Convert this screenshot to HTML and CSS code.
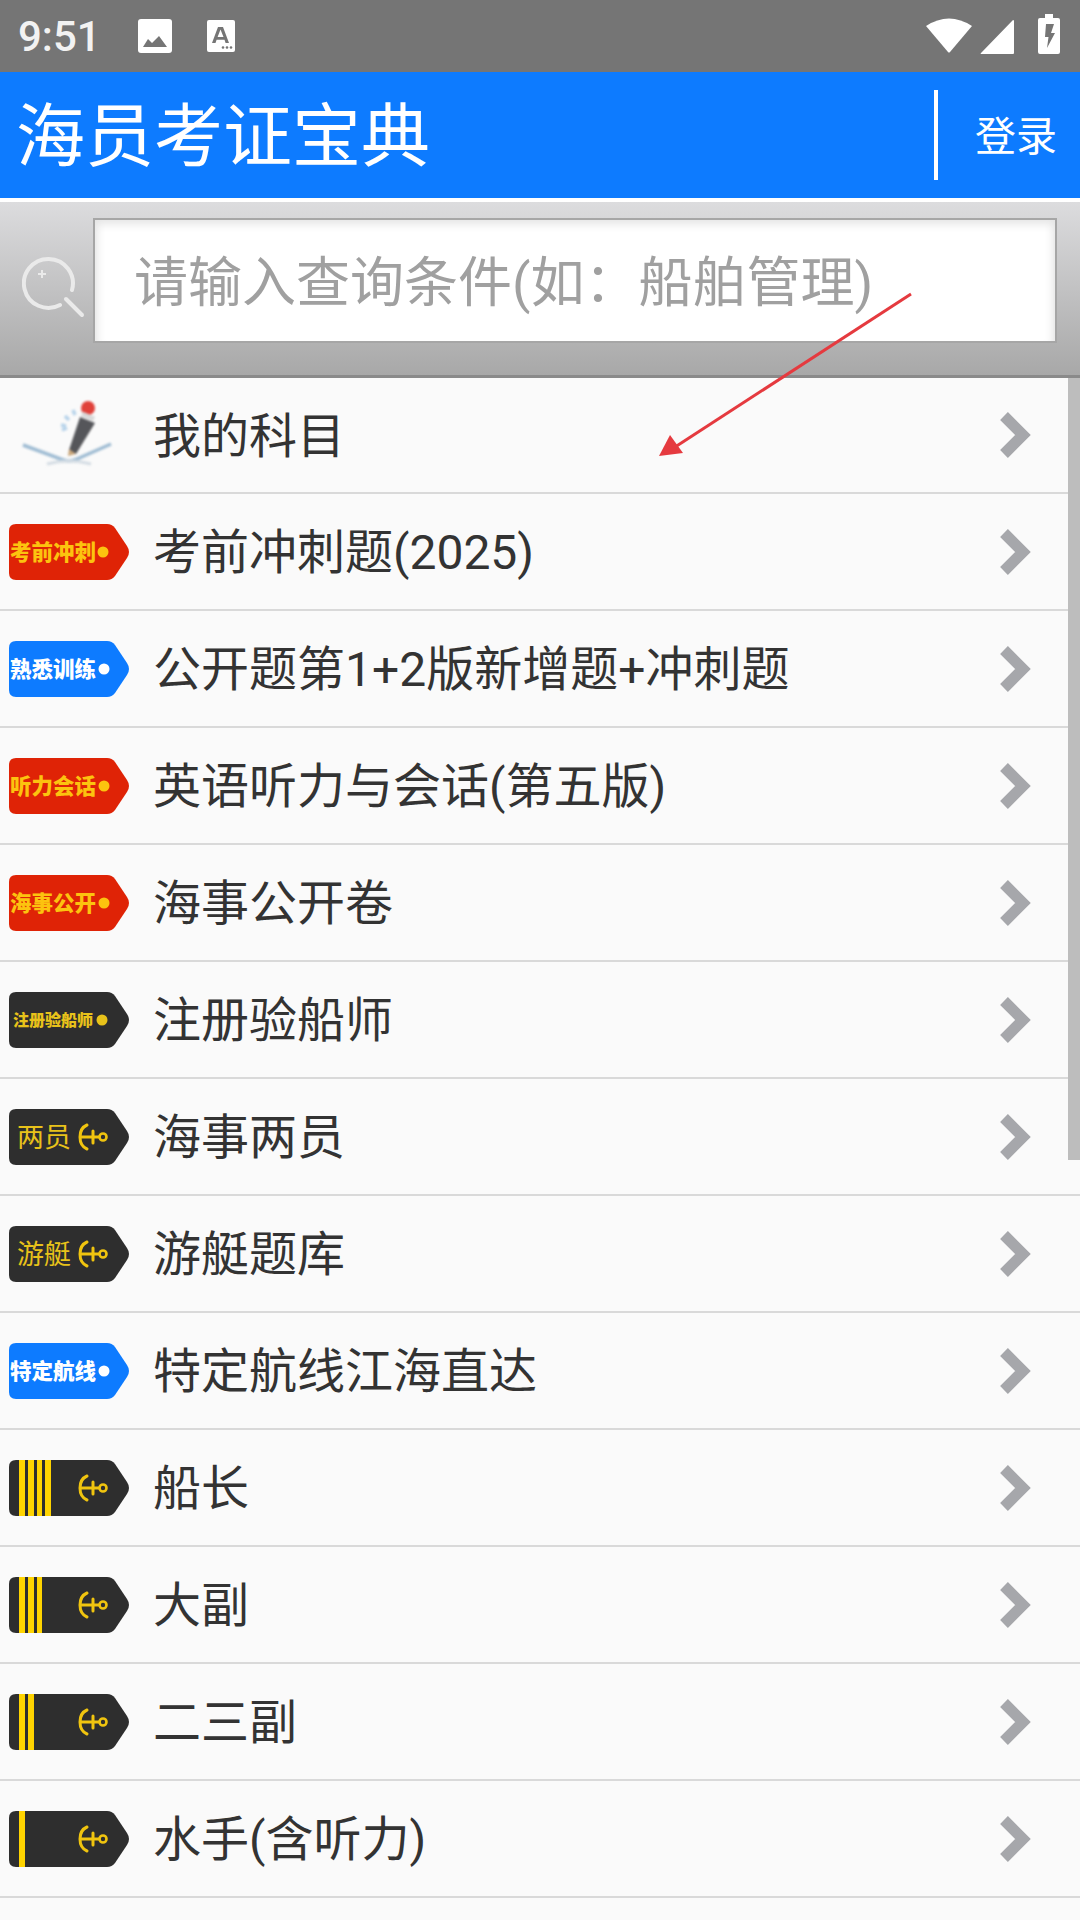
FILE: index.html
```html
<!DOCTYPE html>
<html lang="zh-CN">
<head>
<meta charset="utf-8">
<title>海员考证宝典</title>
<link rel="stylesheet" href="styles.css">
</head>
<body>
<svg class="defs" width="0" height="0" aria-hidden="true">
  <defs>
    <path id="tag" d="M7 0H98Q103 0 106 4L118 22Q122 28 118 34L106 52Q103 56 98 56H7Q0 56 0 49V7Q0 0 7 0Z"/>
    <g id="anchor" fill="none" stroke-linecap="round">
      <path d="M3 -12Q-4 -9 -4 0Q-4 9 3 12" stroke-width="3"/>
      <path d="M-3 0H15M9 -6V6" stroke-width="3"/>
      <circle cx="19" cy="0" r="3.500" stroke-width="2.600"/>
    </g>
    <symbol id="chevron" viewBox="0 0 32 48"><path d="M5 5L24 24L5 43"/></symbol>
  </defs>
</svg>
<div class="phone">
  <header class="status">
    <div class="status-left">
      <span class="time">9:51</span>
      <svg class="ic-img" viewBox="0 0 34 34"><path fill="#fff" d="M3 0H31Q34 0 34 3V31Q34 34 31 34H3Q0 34 0 31V3Q0 0 3 0Z"/><path fill="#757575" d="M5 28L10 20L14 24L21 17L29 28Z"/></svg>
      <svg class="ic-a" viewBox="0 0 28 32"><path fill="#fff" d="M2 0H26Q28 0 28 2V30Q28 32 26 32H2Q0 32 0 30V2Q0 0 2 0Z"/><path fill="#757575" d="M11 7H16L22 23H18.600L17.500 19.800H9.600L8.500 23H5ZM10.600 17H16.500L13.500 9.500Z"/><circle cx="16" cy="27.500" r="1.300" fill="#757575"/><circle cx="20" cy="27.500" r="1.300" fill="#757575"/><circle cx="24" cy="27.500" r="1.300" fill="#757575"/></svg>
    </div>
    <div class="status-right">
      <svg class="ic-wifi" viewBox="0 0 46 36"><path fill="#fff" d="M0 9Q23 -6 46 9L24 35Q23 36 22 35Z"/></svg>
      <svg class="ic-signal" viewBox="0 0 34 34"><path fill="#fff" d="M33 0Q34 0 34 1V33Q34 34 33 34H1Q0 34 1 33Z"/></svg>
      <svg class="ic-batt" viewBox="0 0 22 40"><path fill="#fff" d="M7 0H15V4H20Q22 4 22 6V38Q22 40 20 40H2Q0 40 0 38V6Q0 4 2 4H7Z"/><path fill="#757575" d="M8 10H16L13 19H17L9 34L10.500 23H7Z"/></svg>
    </div>
  </header>

  <div class="appbar">
    <h1 class="title">海员考证宝典</h1>
    <span class="divider"></span>
    <span class="login">登录</span>
  </div>

  <div class="search">
    <svg class="ic-search" viewBox="0 0 64 66"><path d="M38 51A24.500 24.500 0 1 1 50 36" fill="none" stroke="#eaeaea" stroke-width="4" stroke-linecap="round"/><path d="M44 45L60 61" stroke="#eaeaea" stroke-width="4" stroke-linecap="round"/><path d="M20 16V24M16 20H24" stroke="#eaeaea" stroke-width="2"/></svg>
    <div class="input">请输入查询条件(如：船舶管理)</div>
  </div>

  <main class="list">
    <div class="row">
      <svg class="badge book" viewBox="0 0 120 70"><path d="M14 45L52 59Q60 63 68 59L102 44" fill="none" stroke="#9fbcd3" stroke-width="3.500"/><path d="M38 64Q60 58 82 64" fill="none" stroke="#d5dde4" stroke-width="3"/><path d="M60 50L71 17L86 23L67 54Z" fill="#55565a"/><path d="M59 56L60 49L67 54Z" fill="#c9a67a"/><circle cx="79" cy="8" r="7" fill="#e0413a"/><path d="M73 14L85 19" stroke="#d8d8d8" stroke-width="5"/><path d="M56 16L60 20M64 10L66 15M52 25L57 26M53 30L58 28" stroke="#b7d3ea" stroke-width="3.500"/></svg>
      <span class="label">我的科目</span>
      <svg class="chev"><use href="#chevron"/></svg>
    </div>
    <div class="row">
      <svg class="badge" viewBox="0 0 120 56"><use href="#tag" class="t-red"/><text x="1" y="36" class="bt b-gold">考前冲刺</text><circle cx="94" cy="28" r="5.500" class="b-gold"/></svg>
      <span class="label">考前冲刺题(2025)</span>
      <svg class="chev"><use href="#chevron"/></svg>
    </div>
    <div class="row">
      <svg class="badge" viewBox="0 0 120 56"><use href="#tag" class="t-blue"/><text x="1" y="36" class="bt b-white">熟悉训练</text><circle cx="95" cy="28" r="5.500" class="b-white"/></svg>
      <span class="label">公开题第1+2版新增题+冲刺题</span>
      <svg class="chev"><use href="#chevron"/></svg>
    </div>
    <div class="row">
      <svg class="badge" viewBox="0 0 120 56"><use href="#tag" class="t-red"/><text x="1" y="36" class="bt b-gold">听力会话</text><circle cx="95" cy="28" r="5.500" class="b-gold"/></svg>
      <span class="label">英语听力与会话(第五版)</span>
      <svg class="chev"><use href="#chevron"/></svg>
    </div>
    <div class="row">
      <svg class="badge" viewBox="0 0 120 56"><use href="#tag" class="t-red"/><text x="1" y="36" class="bt b-gold">海事公开</text><circle cx="95" cy="28" r="5.500" class="b-gold"/></svg>
      <span class="label">海事公开卷</span>
      <svg class="chev"><use href="#chevron"/></svg>
    </div>
    <div class="row">
      <svg class="badge" viewBox="0 0 120 56"><use href="#tag" class="t-dark"/><text x="4" y="34" class="bt-s b-dark">注册验船师</text><circle cx="93" cy="28" r="5.500" class="b-dark"/></svg>
      <span class="label">注册验船师</span>
      <svg class="chev"><use href="#chevron"/></svg>
    </div>
    <div class="row">
      <svg class="badge" viewBox="0 0 120 56"><use href="#tag" class="t-dark"/><text x="8" y="38" class="bt-l b-dark">两员</text><use href="#anchor" x="75" y="28" class="anchor"/></svg>
      <span class="label">海事两员</span>
      <svg class="chev"><use href="#chevron"/></svg>
    </div>
    <div class="row">
      <svg class="badge" viewBox="0 0 120 56"><use href="#tag" class="t-dark"/><text x="8" y="38" class="bt-l b-dark">游艇</text><use href="#anchor" x="75" y="28" class="anchor"/></svg>
      <span class="label">游艇题库</span>
      <svg class="chev"><use href="#chevron"/></svg>
    </div>
    <div class="row">
      <svg class="badge" viewBox="0 0 120 56"><use href="#tag" class="t-blue"/><text x="1" y="36" class="bt b-white">特定航线</text><circle cx="95" cy="28" r="5.500" class="b-white"/></svg>
      <span class="label">特定航线江海直达</span>
      <svg class="chev"><use href="#chevron"/></svg>
    </div>
    <div class="row">
      <svg class="badge" viewBox="0 0 120 56"><use href="#tag" class="t-dark"/><path class="stripe" d="M10 0h6v56h-6zM19 0h6v56h-6zM28 0h5v56h-5zM36 0h6v56h-6z"/><use href="#anchor" x="75" y="28" class="anchor"/></svg>
      <span class="label">船长</span>
      <svg class="chev"><use href="#chevron"/></svg>
    </div>
    <div class="row">
      <svg class="badge" viewBox="0 0 120 56"><use href="#tag" class="t-dark"/><path class="stripe" d="M10 0h6v56h-6zM19 0h6v56h-6zM28 0h5v56h-5z"/><use href="#anchor" x="75" y="28" class="anchor"/></svg>
      <span class="label">大副</span>
      <svg class="chev"><use href="#chevron"/></svg>
    </div>
    <div class="row">
      <svg class="badge" viewBox="0 0 120 56"><use href="#tag" class="t-dark"/><path class="stripe" d="M10 0h6v56h-6zM19 0h6v56h-6z"/><use href="#anchor" x="75" y="28" class="anchor"/></svg>
      <span class="label">二三副</span>
      <svg class="chev"><use href="#chevron"/></svg>
    </div>
    <div class="row">
      <svg class="badge" viewBox="0 0 120 56"><use href="#tag" class="t-dark"/><path class="stripe" d="M10 0h6v56h-6z"/><use href="#anchor" x="75" y="28" class="anchor"/></svg>
      <span class="label">水手(含听力)</span>
      <svg class="chev"><use href="#chevron"/></svg>
    </div>
    <div class="scrollbar"></div>
  </main>

  <svg class="arrow" viewBox="0 0 1080 1920"><path d="M911 294L672 449" stroke="#e53a3f" stroke-width="3" fill="none"/><path d="M659 456L670 435L683 453Z" fill="#e53a3f"/></svg>
</div>
</body>
</html>
```
FILE: styles.css
```css
* { box-sizing: border-box; }
html, body { margin: 0; padding: 0; }
body { width: 1080px; height: 1920px; overflow: hidden; background: #fafafa; font-family: Roboto, "Noto Sans CJK SC", sans-serif; }
.defs { position: absolute; }
.phone { position: relative; width: 1080px; height: 1920px; overflow: hidden; display: flex; flex-direction: column; }

.status { height: 72px; flex: none; background: #757575; display: flex; justify-content: space-between; align-items: center; padding: 0 20px 0 18px; }
.status-left, .status-right { display: flex; align-items: center; }
.time { font-size: 42px; font-weight: 500; color: #f2f2f2; width: 120px; }
.ic-img { width: 34px; height: 34px; margin-right: 35px; }
.ic-a { width: 28px; height: 32px; }
.ic-wifi { width: 46px; height: 36px; margin: 0 8px 2px 0; }
.ic-signal { width: 34px; height: 34px; margin: 2px 24px 0 0; }
.ic-batt { width: 22px; height: 40px; margin-bottom: 4px; }

.appbar { height: 126px; flex: none; background: #0d7bff; display: flex; align-items: center; color: #fff; padding-left: 16px; }
.title { margin: 5px 0 0; font-size: 69px; font-weight: 400; line-height: 1; flex: 1; white-space: nowrap; }
.divider { width: 4px; height: 90px; background: #fff; }
.login { font-size: 41px; width: 142px; padding-left: 37px; margin-bottom: 4px; font-weight: 400; }

.search { height: 180px; flex: none; border-top: 4px solid #fff; border-bottom: 3px solid #8a8a8a; background: linear-gradient(#dcdcde, #a8a8a8); display: flex; align-items: flex-start; padding: 16px 23px 0 22px; }
.ic-search { width: 64px; height: 66px; flex: none; margin: 36px 7px 0 0; }
.input { flex: 1; height: 125px; background: #fff; border: 2px solid #a6a6a6; box-shadow: inset 0 8px 10px -4px #e4e4e4, inset 10px 0 10px -8px #e4e4e4, inset -10px 0 10px -8px #e4e4e4; color: #a0a0a0; font-size: 54px; line-height: 113px; padding: 7px 0 0 39px; white-space: nowrap; font-weight: 400; }

.list { position: relative; flex: 1; background: #fafafa; }
.row { height: 117px; border-bottom: 2px solid #d9d9d9; display: flex; align-items: center; padding-right: 49px; }
.row:first-child { height: 116px; }
.badge { width: 120px; height: 56px; flex: none; margin-left: 9px; overflow: visible; }
.book { height: 70px; filter: blur(0.9px); }
.label { flex: 1; margin: 0 0 7px 24px; font-size: 48px; color: #333; white-space: nowrap; font-weight: 400; }
.chev { width: 32px; height: 48px; flex: none; filter: blur(0.6px); }
.chev use { fill: none; stroke: #a6a7ab; stroke-width: 11px; }
.scrollbar { position: absolute; top: 0; right: 0; width: 12px; height: 782px; background: #bdbdbd; }

.t-red { fill: #df2306; }
.t-blue { fill: #0d7bff; }
.t-dark { fill: #2e2e2e; }
.bt { font-size: 21.500px; font-weight: 900; }
.bt-s { font-size: 16px; font-weight: 900; }
.bt-l { font-size: 27px; font-weight: 400; }
.b-gold { fill: #fcc30f; }
.b-dark { fill: #e8c21a; }
.b-white { fill: #fff; }
.stripe { fill: #ffd400; }
.anchor { stroke: #f0c40f; }

.arrow { position: absolute; left: 0; top: 0; width: 1080px; height: 1920px; pointer-events: none; }
```
